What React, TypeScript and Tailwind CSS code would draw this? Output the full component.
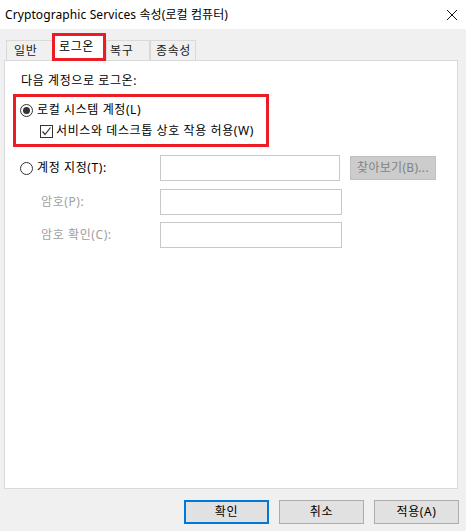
import React from "react";

const font = { fontFamily: '"Noto Sans", "Noto Sans CJK KR", sans-serif' };

const Radio = ({ checked }: { checked?: boolean }) => (
  <span className="w-[13px] h-[13px] rounded-full border border-[#333] bg-white flex items-center justify-center shrink-0">
    {checked && <span className="w-[7px] h-[7px] rounded-full bg-[#333]" />}
  </span>
);

const Check = () => (
  <span className="w-[13px] h-[13px] border border-[#333] bg-white flex items-center justify-center shrink-0">
    <svg width="11" height="11" viewBox="0 0 11 11">
      <path d="M1.5 5.5 L4 8.5 L9.5 1.5" fill="none" stroke="#333" strokeWidth="1.2" />
    </svg>
  </span>
);

const Tab = ({ label, w, pl, selected }: { label: string; w: string; pl: string; selected?: boolean }) => (
  <div
    className={
      selected
        ? `relative ${w} h-[28px] bg-white border-[3px] border-[#ed1c24] ${pl} flex items-center text-black -ml-px z-10`
        : `${w} h-[21px] bg-[#f0f0f0] border border-b-0 border-[#d9d9d9] ${pl} flex items-center text-[#1a1a1a]`
    }
  >
    {label}
  </div>
);

export default function App() {
  return (
    <div style={font} className="w-[466px] h-[531px] bg-[#f0f0f0] flex flex-col text-[12px] text-black overflow-hidden">
      <div className="h-[29px] bg-white flex items-center justify-between pl-[5px] pr-[8px]">
        <span className="text-[12px] tracking-[0.1px]">Cryptographic Services 속성(로컬 컴퓨터)</span>
        <svg width="12" height="12" viewBox="0 0 12 12">
          <path d="M1 1 L11 11 M11 1 L1 11" stroke="#111" strokeWidth="1" />
        </svg>
      </div>

      <div className="flex items-end pl-[6px] mt-[4px] h-[28px] tracking-[0.6px]">
        <Tab label="일반" w="w-[47px]" pl="pl-[7px]" />
        <Tab label="로그온" w="w-[54px]" pl="pl-[4px]" selected />
        <Tab label="복구" w="w-[44px]" pl="pl-[3px]" />
        <Tab label="종속성" w="w-[46px]" pl="pl-[5px]" />
      </div>

      <div className="ml-[4px] w-[454px] h-[429px] -mt-px bg-white border border-[#d9d9d9] flex flex-col tracking-[0.6px]">
        <div className="ml-[16px] mt-[12px] h-[16px] flex items-center">다음 계정으로 로그온:</div>

        <div className="ml-[8px] mt-[5px] w-[256px] h-[53px] border-[3px] border-[#ed1c24] flex flex-col">
          <div className="flex items-center gap-[4px] pl-[4px] mt-[5px] h-[16px]">
            <Radio checked />
            <span>로컬 시스템 계정(L)</span>
          </div>
          <div className="flex items-center gap-[3px] pl-[24px] mt-[5px] h-[16px]">
            <Check />
            <span>서비스와 데스크톱 상호 작용 허용(W)</span>
          </div>
        </div>

        <div className="flex items-center mt-[8px] h-[26px]">
          <div className="w-[155px] flex items-center gap-[4px] pl-[15px]">
            <Radio />
            <span>계정 지정(T):</span>
          </div>
          <div className="w-[180px] h-[26px] border border-[#c8c8c8] bg-white" />
          <div className="ml-[10px] w-[86px] h-[24px] bg-[#cccccc] border border-[#bfbfbf] flex items-center justify-center text-[#838383] tracking-[0.3px]">
            찾아보기(B)...
          </div>
        </div>

        <div className="flex items-center mt-[8px] h-[26px]">
          <div className="w-[155px] pl-[36px] text-[#a0a0a0]">암호(P):</div>
          <div className="w-[182px] h-[26px] border border-[#c8c8c8] bg-white" />
        </div>

        <div className="flex items-center mt-[7px] h-[26px]">
          <div className="w-[155px] pl-[36px] text-[#a0a0a0]">암호 확인(C):</div>
          <div className="w-[182px] h-[26px] border border-[#c8c8c8] bg-white" />
        </div>
      </div>

      <div className="flex justify-end gap-[10px] pr-[7px] mt-[11px] tracking-[0.6px]">
        <button className="w-[85px] h-[24px] bg-[#e1e1e1] border-2 border-[#0078d7]">확인</button>
        <button className="w-[85px] h-[24px] bg-[#e1e1e1] border border-[#adadad]">취소</button>
        <button className="w-[85px] h-[24px] bg-[#e1e1e1] border border-[#adadad]">적용(A)</button>
      </div>
    </div>
  );
}
